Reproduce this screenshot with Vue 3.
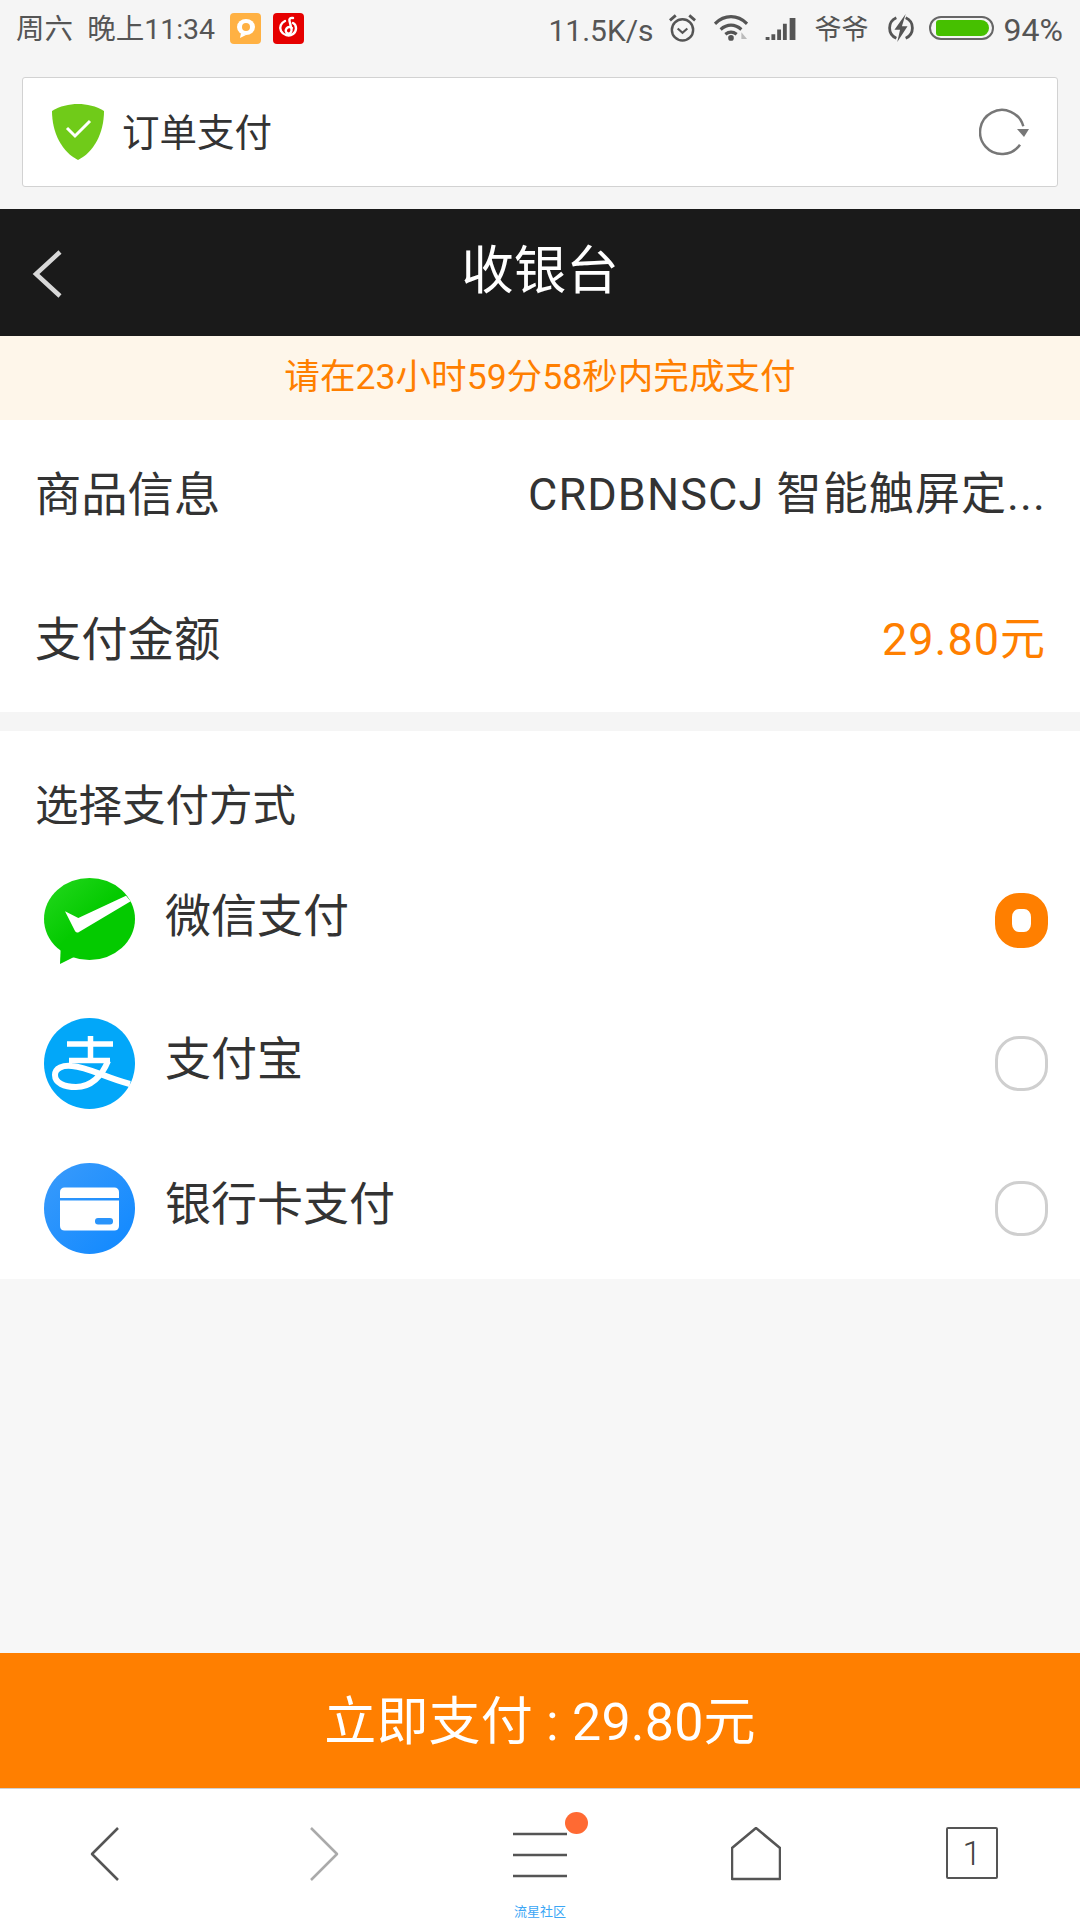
<script setup>
const methods = [
  { name: '微信支付', icon: 'wechat', checked: true },
  { name: '支付宝', icon: 'alipay', checked: false },
  { name: '银行卡支付', icon: 'card', checked: false },
]
</script>

<template>
  <div class="page">
    <div class="status">
      <span class="st-left">周六&nbsp;&nbsp;晚上11:34</span>
      <svg class="app-ic first" viewBox="0 0 31 31" width="31" height="31">
        <rect width="31" height="31" rx="4" fill="#ffb143" />
        <ellipse cx="16" cy="14" rx="9" ry="8" fill="#fff" />
        <path d="M11 20l-1 5 6-3z" fill="#fff" />
        <circle cx="16" cy="14" r="4" fill="#ffb143" />
      </svg>
      <svg class="app-ic" viewBox="0 0 31 31" width="31" height="31">
        <rect width="31" height="31" rx="4" fill="#e60000" />
        <path d="M20 5c-3-.5-4 1-3.500 3l2 8c.5 3-1.500 5-3.500 4.500s-3-3-1.500-5 4-2 5.500-.5M12 8c-4 2-6 6-4 10s8 6 12 3 4-9 0-11" fill="none" stroke="#fff" stroke-width="2.400" stroke-linecap="round" />
      </svg>
      <span class="st-right">
        <span class="speed">11.5K/s</span>
        <svg class="clock" viewBox="0 0 30 30" width="29" height="30">
          <circle cx="15" cy="17" r="11" fill="none" stroke="#555" stroke-width="2.500" />
          <path d="M10 15.500l5 4.500 5-4.500" fill="none" stroke="#555" stroke-width="2.200" />
          <path d="M2 7l6-5M28 7l-6-5" stroke="#555" stroke-width="3" />
        </svg>
        <svg class="wifi" viewBox="0 0 36 28" width="34" height="27">
          <path d="M1 9c10-10 24-10 34 0M7 15c7-6 15-6 22 0M12 20c4-3 8-3 12 0" fill="none" stroke="#555" stroke-width="3.400" />
          <circle cx="18" cy="24" r="3" fill="#555" />
          <path d="M29 18l6 7h-6z" fill="#bbb" />
        </svg>
        <svg class="signal" viewBox="0 0 33 25" width="33" height="24">
          <path d="M0 22h4v3H0zM6 19h4v6H6zM12 14h4v11h-4zM18 8h4v17h-4zM25 2h6v23h-6z" fill="#555" />
        </svg>
        <span class="carrier">爷爷</span>
        <svg class="charge" viewBox="0 0 30 30" width="28" height="28">
          <path d="M10 4a12 12 0 0 0 0 22M20 4a12 12 0 0 1 0 22" fill="none" stroke="#555" stroke-width="3" />
          <path d="M20 0L8 17h6l-3 13 11-17h-6z" fill="#555" />
        </svg>
        <span class="battery"><span class="battery-fill"></span></span>
        <span class="pct">94%</span>
      </span>
    </div>

    <div class="address">
      <svg class="shield" viewBox="0 0 52 56" width="52" height="56">
        <path d="M0 7C8 2 17 0 26 0s18 2 26 7c0 22-10 41-26 49C10 48 0 29 0 7z" fill="#70cb19" />
        <path d="M15 24l8 8 15-15" fill="none" stroke="#fff" stroke-width="3" />
      </svg>
      <span class="addr-title">订单支付</span>
      <svg class="reload" viewBox="0 0 50 48" width="50" height="48">
        <path d="M41 36.700A22 22 0 1 1 44.300 18.300" fill="none" stroke="#777" stroke-width="2.500" />
        <path d="M38 21h12l-5 8z" fill="#777" />
      </svg>
    </div>

    <header class="topbar">
      <svg class="back" viewBox="0 0 32 48" width="32" height="48">
        <path d="M29 2L5 24l24 22" fill="none" stroke="#d8d8d8" stroke-width="4.500" />
      </svg>
      <h1>收银台</h1>
    </header>

    <div class="notice">请在23小时59分58秒内完成支付</div>

    <section class="info">
      <div class="info-row">
        <span class="info-key">商品信息</span>
        <span class="info-val">CRDBNSCJ 智能触屏定...</span>
      </div>
      <div class="info-row">
        <span class="info-key">支付金额</span>
        <span class="info-val orange">29.80元</span>
      </div>
    </section>

    <section class="pay">
      <div class="pay-title">选择支付方式</div>
      <div v-for="m in methods" :key="m.name" class="method">
        <svg v-if="m.icon === 'wechat'" class="m-ic" viewBox="0 0 91 86" width="91" height="86">
          <defs>
            <linearGradient id="wg" x1="0" y1="0" x2="1" y2="1">
              <stop offset="0" stop-color="#25d81f" />
              <stop offset=".5" stop-color="#04ca00" />
            </linearGradient>
          </defs>
          <ellipse cx="45.500" cy="41" rx="45.500" ry="41" fill="url(#wg)" />
          <path d="M16.700 70L16 86l14-7z" fill="#04ca00" />
          <path d="M21 33.300L34.300 40 82 17.700l4.700 5.600L35 54c-1.500 1-3 .5-4-1z" fill="#fff" />
        </svg>
        <svg v-else-if="m.icon === 'alipay'" class="m-ic" viewBox="0 0 91 91" width="91" height="91">
          <circle cx="45.500" cy="45.500" r="45.500" fill="#02a7f9" />
          <path d="M23 26h46M46.500 18v25M25 42.500h41" fill="none" stroke="#fff" stroke-width="5.500" />
          <path d="M64 43C58 58 47 69 32 69C20 69 11 65 11 57C11 50 19 47 28 48C44 49 62 60 86 66" fill="none" stroke="#fff" stroke-width="6" />
        </svg>
        <svg v-else class="m-ic" viewBox="0 0 91 91" width="91" height="91">
          <defs>
            <linearGradient id="cg" x1="0" y1="0" x2="1" y2="1">
              <stop offset="0" stop-color="#3a9bfb" />
              <stop offset="1" stop-color="#0f88ff" />
            </linearGradient>
          </defs>
          <circle cx="45.500" cy="45.500" r="45.500" fill="url(#cg)" />
          <path d="M16 35v-6c0-3 2-4.500 4.500-4.500h50c2.500 0 4.500 1.500 4.500 4.500v6zM16 37.500h59V63c0 3-2 4.500-4.500 4.500h-50C18 67.500 16 66 16 63z" fill="#fff" />
          <rect x="51" y="55" width="18" height="6.500" rx="3" fill="#2a94fb" />
        </svg>
        <span class="m-name">{{ m.name }}</span>
        <span class="radio" :class="{ on: m.checked }"></span>
      </div>
    </section>

    <div class="spacer"></div>

    <button class="paybtn">立即支付 : 29.80元</button>

    <nav class="bottom">
      <div class="nav-item shift">
        <svg viewBox="0 0 32 54" width="32" height="54"><path d="M29 1L3 27l26 26" fill="none" stroke="#555" stroke-width="2.500" stroke-linejoin="round" /></svg>
      </div>
      <div class="nav-item">
        <svg viewBox="0 0 32 54" width="32" height="54"><path d="M3 1l26 26L3 53" fill="none" stroke="#aaa" stroke-width="2.500" stroke-linejoin="round" /></svg>
      </div>
      <div class="nav-item menu">
        <svg viewBox="0 0 54 46" width="54" height="46"><path d="M0 2h54M0 23h54M0 44h54" stroke="#555" stroke-width="2.500" /></svg>
        <span class="dot"></span>
        <span class="nav-label">流星社区</span>
      </div>
      <div class="nav-item">
        <svg viewBox="0 0 50 54" width="50" height="54"><path d="M25 1L49 21v31H1V21z" fill="none" stroke="#555" stroke-width="2.500" stroke-linejoin="round" /></svg>
      </div>
      <div class="nav-item">
        <span class="tabs">1</span>
      </div>
    </nav>
  </div>
</template>

<style scoped>
.page {
  width: 1080px;
  height: 1920px;
  overflow: hidden;
  display: flex;
  flex-direction: column;
  background: #f5f5f5;
  font-family: Roboto, "Noto Sans CJK SC", sans-serif;
  color: #333;
}

.status {
  height: 62px;
  padding: 0 17px 6px 16px;
  box-sizing: border-box;
  display: flex;
  align-items: center;
  font-size: 28.500px;
  color: #555;
}
.st-left { margin-top: -3px; }
.app-ic { margin-left: 12px; flex: none; }
.app-ic.first { margin-left: 15px; }
.st-right { margin-left: auto; display: flex; align-items: center; }
.speed { font-size: 30px; margin-top: 4px; }
.clock { margin-left: 14px; }
.wifi { margin-left: 17px; }
.signal { margin-left: 17px; }
.carrier { margin-left: 17px; font-size: 27px; margin-top: -2px; }
.charge { margin-left: 18px; }
.battery {
  margin-left: 14px;
  width: 65px;
  height: 24px;
  box-sizing: border-box;
  border: 2px solid #666;
  border-radius: 12px;
  padding: 2px 3px 2px 5px;
  display: flex;
}
.battery-fill { flex: 1; background: #46c000; border-radius: 3px 8px 8px 3px; }
.pct { margin-left: 10px; font-size: 32px; margin-top: 4px; }

.address {
  margin: 15px 22px 22px;
  height: 110px;
  box-sizing: border-box;
  background: #fff;
  border: 1px solid #d2d2d2;
  border-radius: 3px;
  display: flex;
  align-items: center;
  padding: 0 28px 0 29px;
}
.shield { flex: none; }
.addr-title { margin-left: 18px; font-size: 37.500px; color: #333; margin-top: -5px; }
.reload { margin-left: auto; }

.topbar {
  height: 127px;
  background: #1a1a1a;
  display: flex;
  align-items: center;
  justify-content: center;
  position: relative;
}
.topbar h1 {
  margin: -14px 0 0;
  font-size: 52.500px;
  font-weight: 400;
  color: #fff;
}
.back { position: absolute; left: 31px; top: 41px; }

.notice {
  height: 84px;
  box-sizing: border-box;
  padding-bottom: 9px;
  background: #fef6ea;
  color: #ff7f00;
  font-size: 35.600px;
  display: flex;
  align-items: center;
  justify-content: center;
}

.info { background: #fff; padding-top: 1px; height: 292px; box-sizing: border-box; }
.info-row {
  height: 146px;
  box-sizing: border-box;
  padding: 0 34px 4px 35px;
  display: flex;
  align-items: center;
  justify-content: space-between;
  font-size: 45px;
  color: #333;
}
.info-row:first-child { height: 143px; }
.info-key { font-size: 46.300px; }
.info-val { letter-spacing: 1.100px; }
.orange { color: #ff7f00; letter-spacing: 1px; }

.pay {
  margin-top: 19px;
  background: #fff;
  height: 548px;
  box-sizing: border-box;
  padding-top: 52px;
}
.pay-title { font-size: 43.500px; line-height: 48px; padding-left: 35px; color: #333; }
.method {
  height: 143px;
  padding: 0 32px 0 44px;
  display: flex;
  align-items: center;
}
.method:nth-child(2) { margin-top: 18px; }
.method:nth-child(4) { margin-top: 2px; }
.m-ic { flex: none; }
.m-name { margin-left: 30px; font-size: 46px; color: #333; margin-top: -18px; }
.radio {
  margin-left: auto;
  width: 53px;
  height: 55px;
  box-sizing: border-box;
  border: 3px solid #cfcfcf;
  border-radius: 24px;
}
.radio.on { border: 16px solid #ff7f00; border-width: 16px 17px; }

.spacer { flex: 1; background: #f7f7f7; }

.paybtn {
  height: 135px;
  flex: none;
  border: 0;
  padding: 0 0 7px;
  background: #ff7f00;
  color: #fff;
  font-family: inherit;
  font-size: 52px;
  letter-spacing: .2px;
}

.bottom {
  height: 132px;
  flex: none;
  box-sizing: border-box;
  background: #fff;
  border-top: 1px solid #d0d0d0;
  display: grid;
  grid-template-columns: repeat(5, 216px);
}
.nav-item {
  position: relative;
  display: flex;
  align-items: flex-start;
  justify-content: center;
  padding-top: 38px;
}
.shift svg { margin-left: -7px; }
.menu { padding-top: 43px; }
.dot {
  position: absolute;
  left: 133px;
  top: 23px;
  width: 23px;
  height: 22px;
  border-radius: 50%;
  background: #ff6a33;
}
.nav-label {
  position: absolute;
  left: 0;
  right: 0;
  top: 115px;
  text-align: center;
  font-size: 13px;
  line-height: 16px;
  color: #3ba6f5;
}
.tabs {
  width: 52px;
  height: 52px;
  box-sizing: border-box;
  border: 2px solid #555;
  border-radius: 2px;
  display: flex;
  align-items: center;
  justify-content: center;
  font-size: 34px;
  font-weight: 300;
  color: #444;
}
</style>

<style>
html, body { margin: 0; background: #f5f5f5; }
</style>
